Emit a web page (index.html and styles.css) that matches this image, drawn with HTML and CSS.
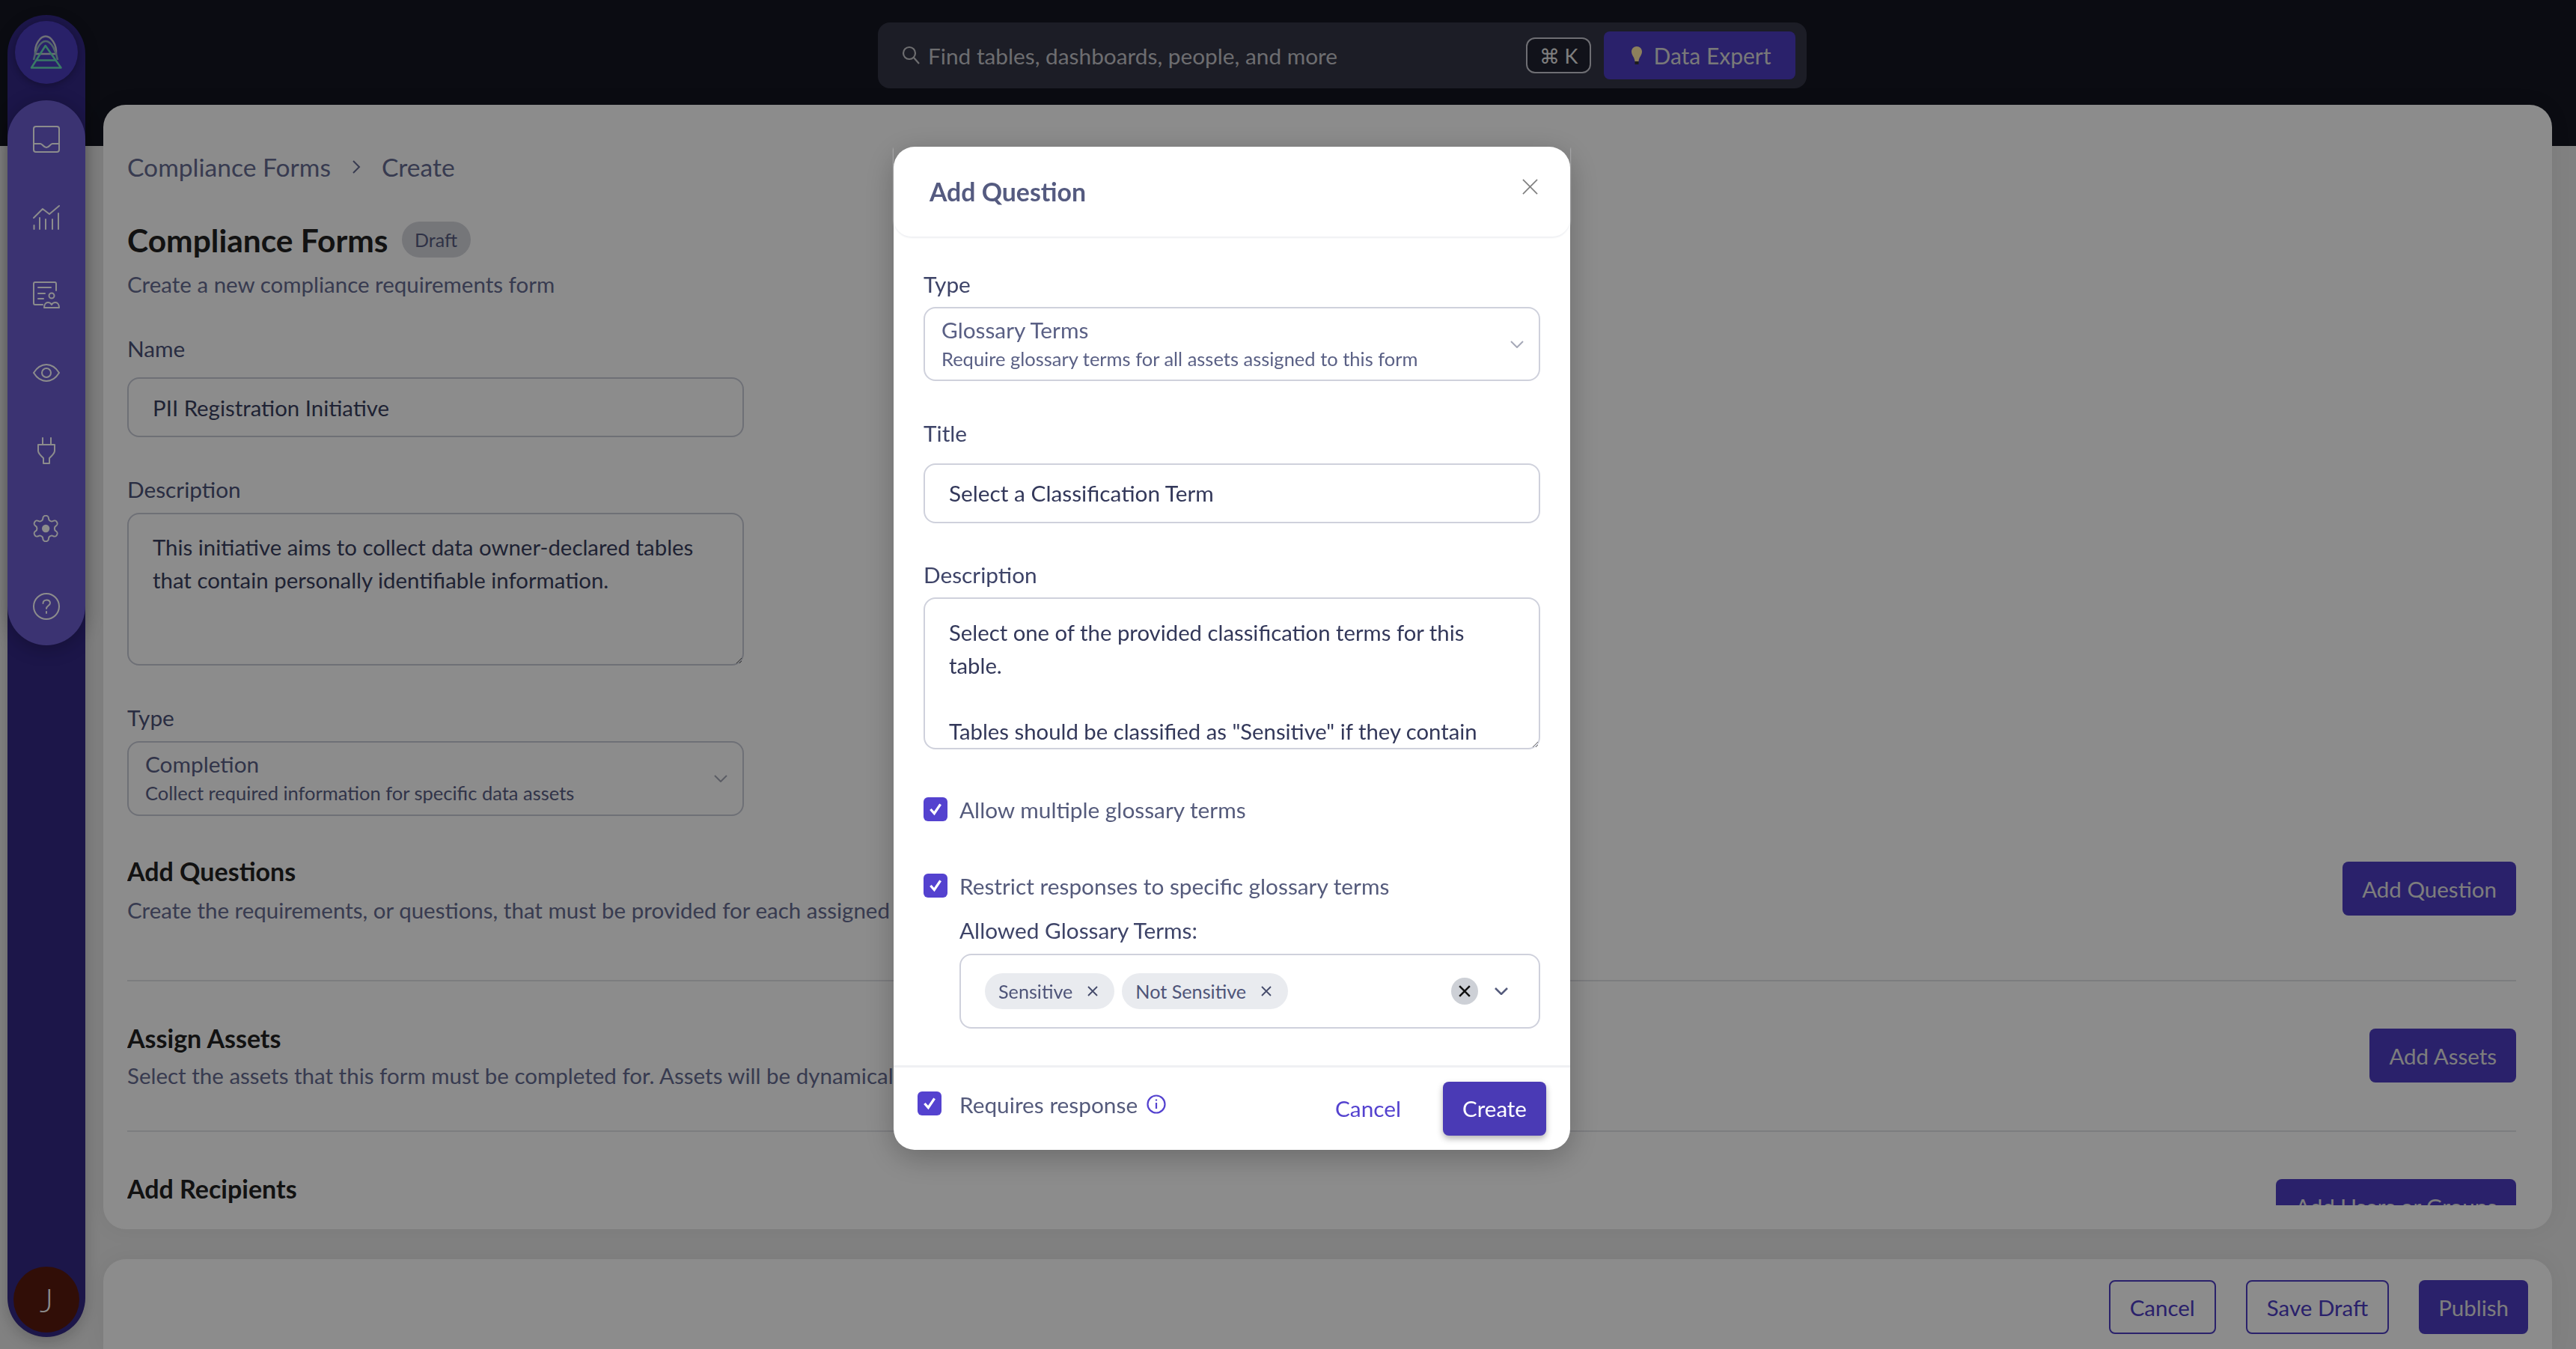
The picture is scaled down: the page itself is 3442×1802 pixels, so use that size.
FILE: index.html
```html
<!DOCTYPE html>
<html lang="en">
<head>
<meta charset="utf-8">
<title>Compliance Forms</title>
<link rel="stylesheet" href="styles.css">
</head>
<body>
<div class="app">
  <aside class="sidebar">
    <div class="logo">
      <svg width="44" height="46" viewBox="0 0 44 46" fill="none" stroke-width="2.500" stroke-linejoin="round">
        <path d="M7 25C6 12 14 1.500 21 1.500S36 12 35 25Z" stroke="#c8ccd8"/>
        <path d="M5 33C7 22 13 8 21 8S35 22 37 33" stroke="#8fb8c0"/>
        <path d="M8 33.500H35" stroke="#69dcb8"/>
        <path d="M2 43.500L20.700 14 41.500 43.500Z" stroke="#69e0b8"/>
      </svg>
    </div>
    <nav class="nav">
      <svg class="ni" viewBox="0 0 36 36"><rect x="1" y="1" width="34" height="34" rx="3"/><path d="M1 24h9c3 0 4 5 8 5s5-5 8-5h9"/></svg>
      <svg class="ni" viewBox="0 0 36 36"><path d="M1 19L13 7l9 7L35 3M1.500 34v-5M9 34V19M17 34V21M26 34V21M34 34V13"/></svg>
      <svg class="ni" viewBox="0 0 36 36"><path d="M13 31H3a2 2 0 0 1-2-2V3a2 2 0 0 1 2-2h26a2 2 0 0 1 2 2v9M7 8h17M7 16h9M7 23h7"/><circle cx="25" cy="19" r="3.500"/><path d="M15 35c0-4 2-7 5-7 2 0 4 1 5 3 1-2 3-3 5-3 3 0 5 3 5 7z"/></svg>
      <svg class="ni" viewBox="0 0 36 36"><path d="M1 18C6 10 12 7 18 7s12 3 17 11c-5 8-11 11-17 11S6 26 1 18z"/><circle cx="18" cy="18" r="6"/></svg>
      <svg class="ni" viewBox="0 0 36 36"><path d="M13 1v9M24 1v9M7 10h22v8c0 3-2 5-4 7l-3 3v7h-8v-7l-3-3c-2-2-4-4-4-7z"/></svg>
      <svg class="ni ni-gear" viewBox="2 1.500 21 21"><path d="M12.220 2h-.44a2 2 0 0 0-2 2v.18a2 2 0 0 1-1 1.730l-.43.25a2 2 0 0 1-2 0l-.15-.08a2 2 0 0 0-2.730.73l-.22.38a2 2 0 0 0 .73 2.730l.15.1a2 2 0 0 1 1 1.720v.51a2 2 0 0 1-1 1.740l-.15.09a2 2 0 0 0-.73 2.730l.22.38a2 2 0 0 0 2.730.73l.15-.08a2 2 0 0 1 2 0l.43.25a2 2 0 0 1 1 1.730V20a2 2 0 0 0 2 2h.44a2 2 0 0 0 2-2v-.18a2 2 0 0 1 1-1.730l.43-.25a2 2 0 0 1 2 0l.15.08a2 2 0 0 0 2.730-.73l.22-.39a2 2 0 0 0-.73-2.730l-.15-.08a2 2 0 0 1-1-1.740v-.5a2 2 0 0 1 1-1.740l.15-.09a2 2 0 0 0 .73-2.730l-.22-.38a2 2 0 0 0-2.730-.73l-.15.08a2 2 0 0 1-2 0l-.43-.25a2 2 0 0 1-1-1.730V4a2 2 0 0 0-2-2z"/><circle class="fl" cx="12" cy="12" r="3"/></svg>
      <svg class="ni" viewBox="0 0 36 36"><circle cx="18" cy="18" r="17"/><path d="M13.500 14c0-6 9.500-6 9.500-.500 0 3.500-5 3.500-5 7.500M18 25v2"/></svg>
    </nav>
    <div class="grow"></div>
    <div class="avatar">J</div>
  </aside>

  <div class="content">
    <header class="topbar">
      <div class="search">
        <svg class="search-icon" viewBox="0 0 26 26"><circle cx="11" cy="10" r="8"/><path d="M17 16l7 8"/></svg>
        <span class="search-text">Find tables, dashboards, people, and more</span>
        <span class="kbd">⌘ K</span>
        <button class="expert">
          <svg class="bulb" viewBox="0 0 16 26"><path d="M8 1c4 0 7 3 7 7 0 5-4 7-4.500 13h-5C5 15 1 13 1 8c0-4 3-7 7-7z" fill="#ffe9a8"/><path d="M5.500 21h5v4h-5z" fill="#333"/></svg>
          Data Expert
        </button>
      </div>
    </header>

    <main class="card">
      <div class="scroll">
        <div class="crumbs"><span>Compliance Forms</span><svg class="crumb-sep" viewBox="0 0 10 18"><path d="M1 1l8 8-8 8"/></svg><span>Create</span></div>
        <div class="title-row"><h1>Compliance Forms</h1><span class="pill">Draft</span></div>
        <p class="sub">Create a new compliance requirements form</p>

        <label class="lbl lbl-name">Name</label>
        <div class="field field-input">PII Registration Initiative</div>

        <label class="lbl lbl-desc">Description</label>
        <textarea class="field field-area" readonly>This initiative aims to collect data owner-declared tables
that contain personally identifiable information.</textarea>

        <label class="lbl lbl-type">Type</label>
        <div class="field field-select">
          <div>
            <div class="sel-main">Completion</div>
            <div class="sel-sub">Collect required information for specific data assets</div>
          </div>
          <svg class="chev" viewBox="0 0 18 10"><path d="M1 1l8 8 8-8"/></svg>
        </div>

        <section class="section sec-q">
          <div><h2>Add Questions</h2><p class="sub sec-sub">Create the requirements, or questions, that must be provided for each assigned</p></div>
          <button class="btn btn-primary">Add Question</button>
        </section>
        <section class="section sec-a">
          <div><h2>Assign Assets</h2><p class="sub sec-sub">Select the assets that this form must be completed for. Assets will be dynamical</p></div>
          <button class="btn btn-primary">Add Assets</button>
        </section>
        <section class="section sec-r">
          <div><h2>Add Recipients</h2></div>
          <button class="btn btn-primary">Add Users or Groups</button>
        </section>
      </div>
    </main>

    <footer class="actions">
      <button class="btn btn-outline">Cancel</button>
      <button class="btn btn-outline">Save Draft</button>
      <button class="btn btn-primary">Publish</button>
    </footer>
  </div>
</div>

<div class="overlay">
  <div class="modal">
    <div class="m-head">
      <h3>Add Question</h3>
      <svg class="m-close" viewBox="0 0 22 22"><path d="M1 1l20 20 M21 1L1 21"/></svg>
    </div>
    <div class="m-body">
      <label class="m-lbl">Type</label>
      <div class="m-field m-select">
        <div>
          <div class="m-sel-main">Glossary Terms</div>
          <div class="m-sel-sub">Require glossary terms for all assets assigned to this form</div>
        </div>
        <svg class="chev chev-light" viewBox="0 0 18 10"><path d="M1 1l8 8 8-8"/></svg>
      </div>
      <label class="m-lbl m-lbl-title">Title</label>
      <div class="m-field m-input">Select a Classification Term</div>
      <label class="m-lbl m-lbl-desc">Description</label>
      <textarea class="m-field m-area" readonly>Select one of the provided classification terms for this
table.

Tables should be classified as "Sensitive" if they contain</textarea>
      <div class="check-row cr-1"><span class="cb"><svg viewBox="0 0 20 20"><path d="M4 10l4.500 5L16 4"/></svg></span><span>Allow multiple glossary terms</span></div>
      <div class="check-row cr-2"><span class="cb"><svg viewBox="0 0 20 20"><path d="M4 10l4.500 5L16 4"/></svg></span><span>Restrict responses to specific glossary terms</span></div>
      <div class="allowed">
        <label class="m-lbl allowed-lbl">Allowed Glossary Terms:</label>
        <div class="m-field multi">
          <span class="chip">Sensitive<svg viewBox="0 0 14 14"><path d="M1 1l12 12 M13 1L1 13"/></svg></span>
          <span class="chip">Not Sensitive<svg viewBox="0 0 14 14"><path d="M1 1l12 12 M13 1L1 13"/></svg></span>
          <span class="grow"></span>
          <span class="clear"><svg viewBox="0 0 14 14"><path d="M1 1l12 12 M13 1L1 13"/></svg></span>
          <svg class="chev chev-multi" viewBox="0 0 18 10"><path d="M1 1l8 8 8-8"/></svg>
        </div>
      </div>
    </div>
    <div class="m-foot">
      <span class="cb"><svg viewBox="0 0 20 20"><path d="M4 10l4.500 5L16 4"/></svg></span>
      <span class="req">Requires response</span>
      <svg class="info" viewBox="0 0 26 26"><circle cx="13" cy="13" r="11.500"/><path d="M13 11v8 M13 6.500v2"/></svg>
      <span class="grow"></span>
      <button class="m-cancel">Cancel</button>
      <button class="m-create">Create</button>
    </div>
  </div>
</div>
</body>
</html>
```
FILE: styles.css
```css
* { box-sizing: border-box; }
html, body { margin: 0; padding: 0; height: 100%; overflow: hidden; }
body { font-family: "Lato", "Noto Sans", sans-serif; color: #2e3354; }
button { font-family: inherit; border: 0; }
h1, h2, h3, p { margin: 0; }
.grow { flex: 1; }

.app { display: flex; width: 3442px; height: 1802px; padding-left: 10px; background: linear-gradient(#141621 195px, #ebebeb 195px); }

/* sidebar */
.sidebar { width: 104px; height: 1766px; margin-top: 20px; flex: none; display: flex; flex-direction: column; align-items: center; background: #332885; border-radius: 52px; box-shadow: 0 6px 20px rgba(0,0,0,.2); }
.logo { width: 84px; height: 84px; margin-top: 8px; border-radius: 50%; background: #4c3cc0; display: flex; align-items: center; justify-content: center; box-shadow: 0 2px 10px rgba(0,0,0,.3); }
.nav { width: 104px; height: 728px; margin-top: 22px; border-radius: 52px; background: #6c5ecf; display: flex; flex-direction: column; align-items: center; gap: 68px; padding-top: 34px; box-shadow: 0 4px 24px rgba(0,0,0,.25); }
.ni { width: 36px; height: 36px; fill: none; stroke: #fff; stroke-width: 2; stroke-linejoin: round; stroke-linecap: round; }
.ni-gear { stroke-width: 1.150; }
.ni .fl { fill: #fff; stroke: none; }
.avatar { width: 88px; height: 88px; margin-bottom: 6px; border-radius: 50%; background: #5a1a0e; color: #fff; display: flex; align-items: center; justify-content: center; font-size: 44px; font-weight: 300; }

/* content column */
.content { width: 3272px; margin-left: 24px; display: flex; flex-direction: column; }
.topbar { height: 140px; flex: none; padding: 30px 0 0 1035px; }
.search { width: 1241px; height: 88px; display: flex; align-items: center; border-radius: 16px; background: #333545; padding: 0 15px 0 31px; }
.search-icon { width: 26px; height: 26px; fill: none; stroke: #c8c8cc; stroke-width: 2.200; margin-right: 10px; }
.search-text { flex: 1; font-size: 29.800px; color: #c6c6cc; }
.kbd { width: 87px; height: 48px; margin-right: 17px; border: 2px solid #c8c8d1; border-radius: 12px; background: #1f2130; color: #e8e8e8; font-size: 27px; display: flex; align-items: center; justify-content: center; }
.expert { width: 256px; height: 64px; padding-left: 10px; border-radius: 8px; background: #4d3cc3; color: #dcdcdc; font-size: 30px; display: flex; align-items: center; justify-content: center; gap: 14px; }
.bulb { width: 16px; height: 26px; }

.card { height: 1502px; flex: none; background: #fff; border-radius: 30px; padding: 0 48px 32px 32px; box-shadow: 0 0 30px rgba(0,0,0,.06); }
.scroll { height: 1470px; overflow: hidden; }
.crumbs { display: flex; align-items: center; height: 40px; margin-top: 63px; font-size: 33.600px; color: #666c92; }
.crumb-sep { width: 12px; height: 18px; margin: 0 28px; fill: none; stroke: #666c92; stroke-width: 2; }
.title-row { display: flex; align-items: center; gap: 18px; height: 48px; margin-top: 53px; }
h1 { font-size: 42.500px; font-weight: 700; color: #222; }
.pill { width: 92px; height: 48px; border-radius: 24px; background: #d6d7dd; color: #565c80; font-size: 25px; display: flex; align-items: center; justify-content: center; }
.sub { font-size: 29.500px; color: #666c92; line-height: 40px; margin-top: 16px; }
.lbl { display: block; font-size: 29.800px; line-height: 36px; color: #4c5278; }
.lbl-name { margin-top: 48px; }
.field { display: block; width: 824px; border: 2px solid #c9ccd8; border-radius: 16px; background: #fff; font-family: inherit; font-size: 29.400px; color: #3a3f60; }
.lbl + .field { margin-top: 20px; }
.field-input { height: 80px; padding: 0 32px; line-height: 78px; }
.lbl-desc { margin-top: 52px; }
.lbl + .field-area { margin-top: 13px; }
.field-area { height: 204px; padding: 22px 32px; line-height: 44px; resize: both; outline: none; overflow: hidden; }
.lbl-type { margin-top: 52px; }
.lbl + .field-select { margin-top: 13px; }
.field-select { height: 100px; padding: 0 20px 0 22px; display: flex; align-items: center; justify-content: space-between; }
.sel-main { font-size: 29.800px; line-height: 36px; color: #5a6085; }
.sel-sub { font-size: 25.500px; line-height: 36px; margin-top: 2px; color: #5a6085; }
.chev { width: 18px; height: 10px; flex: none; fill: none; stroke: #a6a9b8; stroke-width: 2; }

.section { display: flex; justify-content: space-between; align-items: flex-start; }
h2 { font-size: 34px; font-weight: 700; color: #222; line-height: 40px; }
.sec-sub { margin-top: 10px; }
.sec-q .sec-sub { margin-top: 12px; }
.section .btn { margin-top: 7px; }
.sec-q { margin-top: 54px; height: 167px; border-bottom: 2px solid #e2e3e8; }
.sec-a { height: 201px; border-bottom: 2px solid #e2e3e8; padding-top: 56px; }
.sec-r { height: 180px; padding-top: 56px; }
.btn { height: 72px; padding: 0 26px; border-radius: 8px; font-size: 29.500px; flex: none; }
.btn-primary { background: #4d3cc3; color: #e4e4e4; }
.btn-outline { background: #fff; border: 2px solid #4d3cc3; color: #4d3cc3; }

.actions { height: 120px; margin-top: 40px; flex: none; border-radius: 30px 30px 0 0; background: #fff; display: flex; justify-content: flex-end; align-items: flex-start; gap: 40px; padding: 28px 32px 0 0; box-shadow: 0 0 30px rgba(0,0,0,.06); }

/* modal */
.overlay { position: fixed; inset: 0; background: rgba(0,0,0,.45); padding: 196px 0 0 1194px; }
.modal { width: 904px; height: 1340px; border-radius: 28px; background: #fff; display: flex; flex-direction: column; box-shadow: 0 10px 40px rgba(0,0,0,.25); }
.m-head { height: 120px; flex: none; position: relative; padding: 40px 48px 0; border-radius: 0 0 24px 24px; box-shadow: 0 2px 2px #eff0f3; }
.m-head h3 { font-size: 33.800px; font-weight: 700; line-height: 40px; color: #555b80; }
.m-close { position: absolute; left: 840px; top: 43px; width: 21px; height: 21px; fill: none; stroke: #808080; stroke-width: 1.800; }
.m-body { flex: 1; padding: 44px 40px 0; }
.m-lbl { display: block; font-size: 29.800px; line-height: 40px; color: #3e4468; }
.m-field { display: block; width: 824px; border: 2px solid #cfd1dc; border-radius: 16px; background: #fff; font-family: inherit; font-size: 29.800px; color: #33385a; }
.m-select { height: 99px; margin-top: 10px; padding: 0 22px; display: flex; align-items: center; justify-content: space-between; }
.m-sel-main { font-size: 29.800px; line-height: 36px; color: #5a6085; }
.m-sel-sub { font-size: 25.500px; line-height: 36px; margin-top: 2px; color: #5a6085; }
.chev-light { margin-right: -2px; }
.m-lbl-title { margin-top: 50px; }
.m-input { height: 80px; margin-top: 20px; padding: 0 32px; line-height: 76px; }
.m-lbl-desc { margin-top: 49px; }
.m-area { height: 203px; margin-top: 10px; padding: 23px 32px 0; font-size: 29.300px; line-height: 44px; resize: both; outline: none; overflow: hidden; }
.check-row { display: flex; align-items: center; gap: 16px; font-size: 29.800px; color: #555b7c; height: 36px; }
.cr-1 { margin-top: 62px; }
.cr-2 { margin-top: 66px; }
.cb { width: 32px; height: 32px; flex: none; border-radius: 6px; background: #5442cf; display: flex; align-items: center; justify-content: center; }
.cb svg { width: 22px; height: 22px; fill: none; stroke: #fff; stroke-width: 3; }
.allowed { padding-left: 48px; margin-top: 22px; }
.allowed-lbl { color: #3e4468; }
.multi { width: 776px; height: 100px; margin-top: 11px; padding: 0 41px 0 32px; display: flex; align-items: center; gap: 10px; }
.chip { height: 48px; padding: 0 22px 0 18px; border-radius: 24px; background: #e9ebef; color: #4e5478; font-size: 25.200px; display: flex; align-items: center; gap: 20px; }
.chip svg { width: 14px; height: 14px; fill: none; stroke: #444a6a; stroke-width: 1.800; }
.clear { width: 36px; height: 36px; border-radius: 50%; background: #cdd0d6; display: flex; align-items: center; justify-content: center; }
.clear svg { width: 16px; height: 16px; fill: none; stroke: #111; stroke-width: 2.200; }
.chev-multi { margin-left: 12px; stroke: #555b7c; stroke-width: 2.500; }
.m-foot { height: 113px; flex: none; border-top: 3px solid #eff0f3; display: flex; align-items: center; padding: 0 32px; border-radius: 0 0 28px 28px; }
.m-foot > .cb { margin-top: -14px; }
.req { margin: -12px 0 0 24px; font-size: 29.800px; color: #555b7c; }
.info { width: 26px; height: 26px; margin: -12px 0 0 12px; fill: none; stroke: #5442cf; stroke-width: 2.200; }
.m-cancel { background: none; color: #5442cf; font-size: 29.800px; margin-right: 56px; padding: 0 0 2px; }
.m-create { width: 138px; height: 72px; padding-bottom: 3px; border-radius: 8px; background: #4a3ab5; color: #fff; font-size: 29.500px; box-shadow: 0 4px 8px rgba(0,0,0,.3); }
```
